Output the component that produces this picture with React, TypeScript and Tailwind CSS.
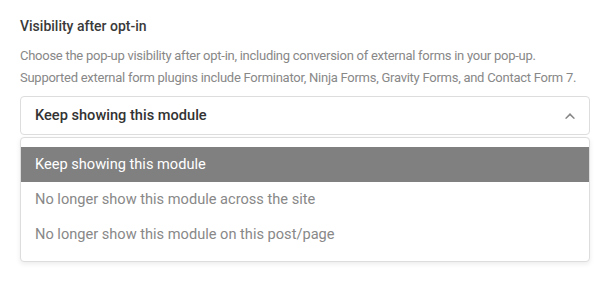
import { useState } from 'react';

const options = [
  'Keep showing this module',
  'No longer show this module across the site',
  'No longer show this module on this post/page',
];

/** Visibility-after-opt-in setting with its select opened. */
export default function App() {
  const [selected, setSelected] = useState(0);

  return (
    <div className="min-h-screen bg-white px-5 pt-[15px] font-['Roboto',sans-serif]">
      <h3 className="text-[14px] leading-[22px] font-medium text-[#3a3a3a]">Visibility after opt-in</h3>
      <p className="mt-[8px] text-[13px] leading-[22px] tracking-[-0.26px] text-[#888]">
        Choose the pop-up visibility after opt-in, including conversion of external forms in your pop-up.
        <br />
        Supported external form plugins include Forminator, Ninja Forms, Gravity Forms, and Contact Form 7.
      </p>

      <button
        type="button"
        className="mt-[7px] flex h-[39px] w-full items-center justify-between rounded-[4px] border border-[#ddd] bg-white pl-[14px] pr-[14px] text-left"
      >
        <span className="text-[14.6px] font-medium text-[#333]">{options[selected]}</span>
        <svg width="10" height="6" viewBox="0 0 10 6" className="text-[#888]">
          <path d="M5 0L10 5.2 8.8 6 5 2.4 1.2 6 0 5.2Z" fill="currentColor" />
        </svg>
      </button>

      {/* Open dropdown list */}
      <ul className="mt-[2px] rounded-[4px] border border-[#ddd] bg-white pt-[9px] pb-[9px] shadow-[0_2px_5px_rgba(0,0,0,0.08)]">
        {options.map((opt, i) => (
          <li
            key={opt}
            onClick={() => setSelected(i)}
            className={
              i === selected
                ? 'flex h-[35px] cursor-pointer items-center bg-[#808080] px-[14px] text-[14.6px] text-white'
                : 'flex h-[35px] cursor-pointer items-center px-[14px] text-[14.6px] text-[#888]'
            }
          >
            {opt}
          </li>
        ))}
      </ul>
    </div>
  );
}
